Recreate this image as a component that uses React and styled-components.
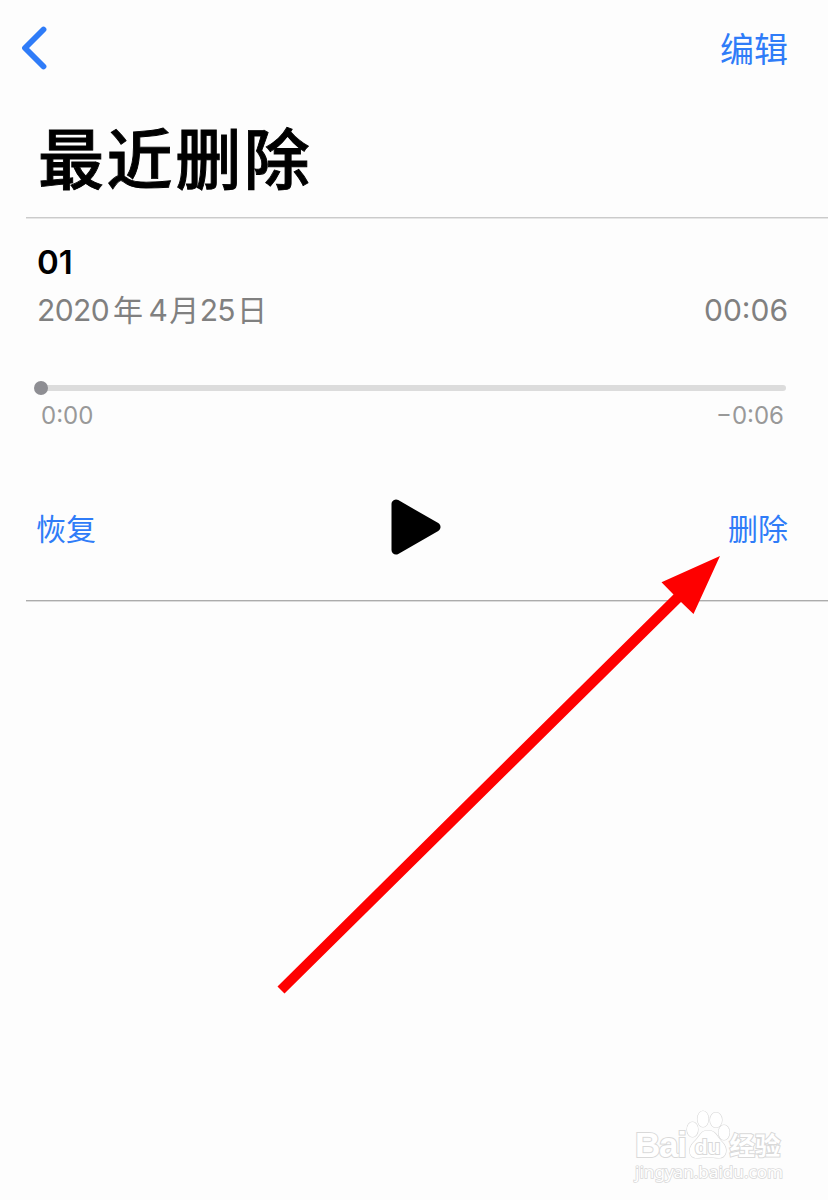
import React from 'react';
import styled, { createGlobalStyle } from 'styled-components';

const GlobalStyle = createGlobalStyle`
    body {
        margin: 0;
        background: #fdfdfd;
        font-family: Inter, "Noto Sans CJK SC", sans-serif;
    }
    button {
        border: none;
        padding: 0;
        background: none;
        font-family: inherit;
    }
`;

const Page = styled.main`
    position: relative;
    width: 828px;
    height: 1200px;
    overflow: hidden;
    background: #fdfdfd;
`;

const NavBar = styled.header`
    display: flex;
    justify-content: space-between;
    align-items: center;
    height: 96px;
    padding: 0 40px 0 20px;
`;

const BackButton = styled.button`
    display: flex;
`;

const TextButton = styled.button`
    padding-top: 3px;
    color: #2f7cf8;
    font-size: ${({ $size }) => $size}px;
    line-height: 50px;
`;

const Title = styled.h1`
    margin: 0;
    padding: 15px 0 0 38px;
    height: 106px;
    font-size: 66px;
    font-weight: 500;
    line-height: 98px;
    letter-spacing: 2.6px;
    color: #000;
    -webkit-text-stroke: 0.9px #000;
`;

const Recording = styled.section`
    margin-left: 26px;
    height: 382px;
    border-top: 1px solid #cbcbcb;
    border-bottom: 1px solid #acacac;
    box-shadow: inset 0 1px 0 #e6e6e6, 0 1px 0 #dcdcdc;
`;

const Name = styled.h2`
    margin: 0;
    padding: 24px 0 0 11px;
    font-size: 33px;
    font-weight: 600;
    line-height: 40px;
    color: #000;
`;

const Row = styled.div`
    display: flex;
    justify-content: space-between;
    align-items: center;
`;

const InfoRow = styled(Row)`
    height: 55px;
    padding: 0 40px 1px 11px;
    color: #808080;
    font-size: 30px;
    line-height: 36px;
`;

const DateText = styled.span`
    letter-spacing: -0.6px;
`;

const Cjk = styled.span`
    font-family: "Noto Sans CJK SC", sans-serif;
    line-height: 0;
    margin-left: ${({ $left }) => $left}px;
    margin-right: ${({ $right }) => $right || 0}px;
`;

const Track = styled.div`
    display: flex;
    align-items: center;
    height: 6px;
    margin: 46.5px 42px 0 11px;
    border-radius: 3px;
    background: #dcdcdc;
`;

const Knob = styled.span`
    width: 14px;
    height: 14px;
    margin-left: -3px;
    border-radius: 50%;
    background: #8e8e93;
`;

const TimeRow = styled(Row)`
    height: 28px;
    margin-top: 10.5px;
    padding: 0 44px 0 15px;
    font-size: 24px;
    color: #999;
`;

const Controls = styled.div`
    display: grid;
    grid-template-columns: 1fr auto 1fr;
    align-items: center;
    height: 60px;
    margin-top: 68px;
    padding: 0 40px 0 10px;

    > :last-child {
        justify-self: end;
    }
    > :first-child {
        justify-self: start;
    }
`;

const PlayButton = styled.button`
    display: flex;
    margin-left: 8px;
`;

const Arrow = styled.svg`
    position: absolute;
    left: 0;
    top: 0;
    pointer-events: none;
`;

const Watermark = styled.div`
    position: absolute;
    left: 635px;
    top: 1108px;
    width: 160px;
    color: #fff;
    -webkit-text-stroke: 2px #d9d9d9;
    paint-order: stroke fill;
`;

const Brand = styled.div`
    display: flex;
    align-items: flex-end;
    height: 52px;
`;

const Latin = styled.span`
    font-family: "Liberation Sans", sans-serif;
    font-size: 35px;
    font-weight: 700;
    line-height: 30px;
    letter-spacing: -1.3px;
`;

const Chinese = styled.span`
    font-family: "Noto Sans CJK SC", sans-serif;
    font-size: 25.5px;
    font-weight: 700;
    line-height: 32px;
`;

const Paw = styled.svg`
    fill: #fff;
    stroke: #d9d9d9;
    stroke-width: 1.2px;

    text {
        font: 700 21px "Liberation Sans", sans-serif;
        -webkit-text-stroke: 0;
        stroke: #d9d9d9;
        stroke-width: 2px;
    }
`;

const Site = styled.div`
    font-family: "Noto Sans", sans-serif;
    font-size: 17.1px;
    line-height: 24px;
    -webkit-text-stroke-width: 1.6px;
`;

export default function App() {
    return (
        <>
            <GlobalStyle />
            <Page>
                <NavBar>
                    <BackButton aria-label="返回">
                        <svg width="30" height="46" viewBox="0 0 30 46" fill="none">
                            <path d="M23.5 4.5L5 23L23.5 41.5" stroke="#2f7cf8" strokeWidth="5.8" strokeLinecap="round" strokeLinejoin="round" />
                        </svg>
                    </BackButton>
                    <TextButton $size={34}>编辑</TextButton>
                </NavBar>
                <Title>最近删除</Title>

                <Recording>
                    <Name>01</Name>
                    <InfoRow>
                        <DateText>
                            2020<Cjk $left={4} $right={6}>年</Cjk>4<Cjk $left={2} $right={1}>月</Cjk>25<Cjk $left={2}>日</Cjk>
                        </DateText>
                        <span>00:06</span>
                    </InfoRow>
                    <Track>
                        <Knob />
                    </Track>
                    <TimeRow>
                        <span>0:00</span>
                        <span>−0:06</span>
                    </TimeRow>
                    <Controls>
                        <TextButton $size={30}>恢复</TextButton>
                        <PlayButton aria-label="播放">
                            <svg width="50" height="56" viewBox="0 0 50 56">
                                <path d="M5 5V51L45 28Z" stroke="#000" strokeWidth="9" strokeLinejoin="round" />
                            </svg>
                        </PlayButton>
                        <TextButton $size={30}>删除</TextButton>
                    </Controls>
                </Recording>

                <Watermark>
                    <Brand>
                        <Latin>Bai</Latin>
                        <Paw width="44" height="52" viewBox="0 0 44 52">
                            <ellipse cx="6.5" cy="21.5" rx="5.5" ry="7.5" />
                            <ellipse cx="17" cy="11" rx="5.5" ry="8" />
                            <ellipse cx="30" cy="12" rx="6" ry="7.5" />
                            <ellipse cx="38" cy="24.5" rx="5.5" ry="7.5" />
                            <path d="M22 22.5C30 22.5 31 29 36 34C43 41 40 50 33 50C29 50 26 49 22 49C18 49 15 50 11 50C3 50 1 41 8 34C14 29 14 22.5 22 22.5Z" />
                            <text x="21.5" y="46" textAnchor="middle">du</text>
                        </Paw>
                        <Chinese>经验</Chinese>
                    </Brand>
                    <Site>jingyan.baidu.com</Site>
                </Watermark>

                {/* pointer towards the delete button */}
                <Arrow width="828" height="1200" viewBox="0 0 828 1200">
                    <path d="M277.5 986.5L673.5 594.5L661.5 582.3L720 556L693.5 614L681 602L284.5 993.5Z" fill="#fe0000" />
                </Arrow>
            </Page>
        </>
    );
}
